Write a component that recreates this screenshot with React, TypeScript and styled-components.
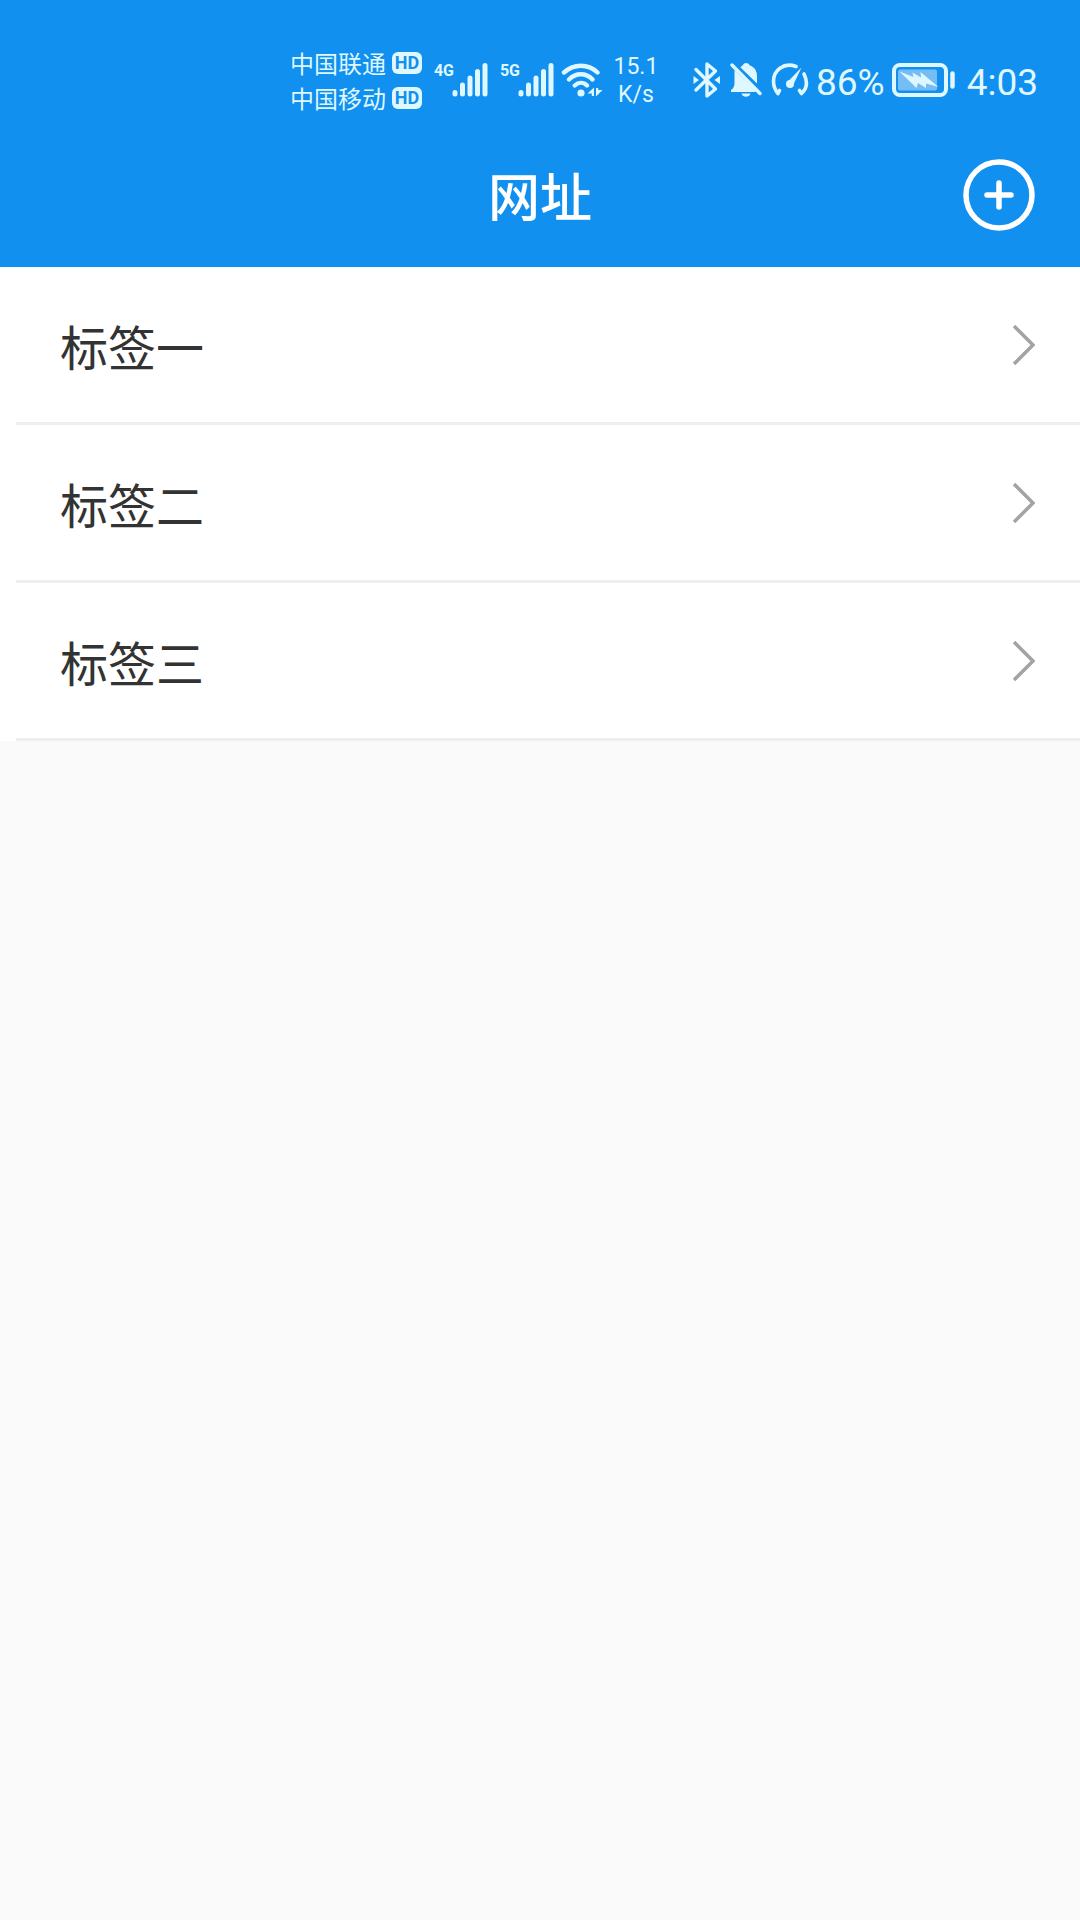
import React from "react";
import styled, { createGlobalStyle } from "styled-components";

const GlobalStyle = createGlobalStyle`
  *, *::before, *::after { box-sizing: border-box; }
  body {
    margin: 0;
    background: #fafafa;
    font-family: Roboto, "Noto Sans CJK SC", sans-serif;
  }
`;

const BLUE = "#1190f0";
const ICE = "#dff7ff";

const Header = styled.header`
  background: ${BLUE};
  color: #fff;
`;

const StatusBar = styled.div`
  display: flex;
  align-items: center;
  justify-content: flex-end;
  height: 123px;
  padding: 37px 42px 0 0;
  color: ${ICE};
  white-space: nowrap;
`;

const Cluster = styled.div<{ $gap: number; $after?: number }>`
  display: flex;
  align-items: center;
  gap: ${(p) => p.$gap}px;
  margin-right: ${(p) => p.$after ?? 0}px;
`;

const Carriers = styled.div`
  display: grid;
  gap: 1px;
`;

const Carrier = styled.div`
  display: flex;
  align-items: center;
  gap: 6px;
  font-family: "Noto Sans CJK SC", sans-serif;
  font-size: 24px;
  line-height: 34px;
`;

const HdBadge = styled.span`
  width: 30px;
  height: 22px;
  border-radius: 6px;
  background: ${ICE};
  color: ${BLUE};
  font-family: Roboto, sans-serif;
  font-size: 18px;
  font-weight: 700;
  line-height: 22px;
  text-align: center;
`;

const Signal = styled.div`
  display: flex;
  align-items: flex-start;
`;

const Generation = styled.span`
  width: 18px;
  font-family: Roboto, sans-serif;
  font-size: 16px;
  font-weight: 700;
  line-height: 16px;
`;

const Speed = styled.div`
  width: 46px;
  padding-top: 2px;
  font-size: 23px;
  line-height: 28px;
  text-align: center;
`;

const StatusText = styled.span`
  font-size: 37px;
  line-height: 44px;
  padding-top: 6px;
`;

const Icon = styled.svg`
  display: block;
  flex: none;
`;

const TitleBar = styled.div`
  display: grid;
  grid-template-columns: 1fr auto 1fr;
  align-items: center;
  height: 144px;
  padding: 0 45px;
`;

const Title = styled.h1`
  grid-column: 2;
  margin: 0;
  font-family: "Noto Sans CJK SC", sans-serif;
  font-size: 52px;
  font-weight: 500;
  line-height: 76px;
`;

const AddButton = styled.button`
  justify-self: end;
  padding: 0;
  border: 0;
  background: none;
  color: #fff;
  cursor: pointer;
`;

const List = styled.ul`
  margin: 0;
  padding: 0;
  list-style: none;
  background: #fff;
`;

const Row = styled.li`
  padding-left: 16px;
`;

const RowLink = styled.a`
  display: flex;
  align-items: center;
  justify-content: space-between;
  height: 158px;
  padding: 0 45px 0 44px;
  border-bottom: 3px solid #eee;
  color: #333;
  font-family: "Noto Sans CJK SC", sans-serif;
  font-size: 48px;
  line-height: 72px;
  text-decoration: none;
`;

function SignalBars() {
  return (
    <Icon width="36" height="34" viewBox="0 0 36 34" stroke={ICE} strokeWidth="5" strokeLinecap="round" aria-hidden="true">
      <path d="M3 29.5v1.5M10.5 22v9M18 15v16M25.5 8.5v22.5M33 2.500v28.5" />
    </Icon>
  );
}

function WifiIcon() {
  return (
    <Icon width="42" height="34" viewBox="0 0 42 34" fill="none" stroke={ICE} strokeWidth="4.4" strokeLinecap="round" aria-hidden="true">
      <path d="M3 9.5C13 0.5 27 0.5 36.5 9.5M8 16.5C15 9.5 25 9.5 31.5 16.5M13.8 22.5C17.5 19 22.5 19 26 22.5" />
      <circle cx="20" cy="30" r="3.6" fill={ICE} stroke="none" />
      <path d="M33 24.500v8.500h-2.200v-2.500H26.500zM35 33.500v-8.500h2.200v2h4.300z" fill={ICE} stroke="none" />
    </Icon>
  );
}

function BluetoothIcon() {
  return (
    <Icon width="28" height="38" viewBox="0 0 28 38" fill="none" stroke={ICE} strokeWidth="3.400" strokeLinejoin="round" strokeLinecap="round" aria-hidden="true">
      <path d="M3 8.500L22.500 28L14 35V22M3 29L22.500 10L14 3V16" />
      <path d="M0.500 15l5.500 4L0.500 23zM27 15L21.500 19l5.500 4z" fill={ICE} stroke="none" />
    </Icon>
  );
}

function MutedBellIcon() {
  return (
    <Icon width="32" height="36" viewBox="0 0 32 36" fill={ICE} aria-hidden="true">
      <path d="M10.5 5.5C11.5 4 12 3.7 13 3.3C13.5 .3 18.5 .3 19.5 3.3C24.5 5 27 9 27 14V21.5z" />
      <path d="M5.5 9L25.5 28.5V30H1V28C3.5 26.5 4.5 24 4.5 21V8z" />
      <path d="M11.5 31.5h9c-1 4.3-8 4.3-9 0z" />
      <path d="M2 3L30 31.5" stroke={ICE} strokeWidth="3.4" strokeLinecap="round" />
    </Icon>
  );
}

function GaugeIcon() {
  return (
    <Icon width="38" height="36" viewBox="0 0 38 36" fill="none" stroke={ICE} strokeWidth="3.6" strokeLinecap="round" strokeLinejoin="round" aria-hidden="true">
      <path d="M25 4.5C13 0 2.500 8 2.500 19.500C2.500 25 4.500 28.500 7 31.500L8.500 28.500M33 12C37 20 35.500 27 30.500 31.500L28.500 28.500" />
      <path d="M30.500 5.500L22 23.500C20 27.500 14 24.500 16 20.500z" fill={ICE} stroke="none" />
      <circle cx="19" cy="22" r="4" fill={ICE} stroke="none" />
    </Icon>
  );
}

function BatteryIcon() {
  return (
    <Icon width="64" height="34" viewBox="0 0 64 34" fill="none" aria-hidden="true">
      <rect x="2" y="2" width="52" height="30" rx="6" stroke={ICE} strokeWidth="4" />
      <rect x="6" y="6.500" width="39" height="21" rx="2" fill="#74bdf7" />
      <path d="M7.500 8.500L21.500 14L20.500 9.500L29 14.500L28.500 9L46.500 24L34 20.500L34 25L26 20L24.500 25z" fill={ICE} />
      <path d="M60.500 10.500v13" stroke={ICE} strokeWidth="4.500" strokeLinecap="round" />
    </Icon>
  );
}

function PlusCircleIcon() {
  return (
    <Icon width="72" height="72" viewBox="0 0 72 72" fill="none" stroke="currentColor" strokeWidth="5.500" strokeLinecap="round" aria-hidden="true">
      <circle cx="36" cy="36" r="33" />
      <path d="M36 24v24M24 36h24" />
    </Icon>
  );
}

function Chevron() {
  return (
    <Icon width="22" height="40" viewBox="0 0 22 40" fill="none" stroke="#a3a3a3" strokeWidth="3.500" aria-hidden="true">
      <path d="M1 1L20 20L1 39" />
    </Icon>
  );
}

const carriers = ["中国联通", "中国移动"];
const generations = ["4G", "5G"];
const labels = ["标签一", "标签二", "标签三"];

export default function App() {
  return (
    <>
      <GlobalStyle />
      <Header>
        <StatusBar>
          <Cluster $gap={12} $after={7}>
            <Carriers>
              {carriers.map((name) => (
                <Carrier key={name}>
                  {name}
                  <HdBadge>HD</HdBadge>
                </Carrier>
              ))}
            </Carriers>
            {generations.map((name) => (
              <Signal key={name}>
                <Generation>{name}</Generation>
                <SignalBars />
              </Signal>
            ))}
          </Cluster>
          <Cluster $gap={10} $after={34}>
            <WifiIcon />
            <Speed>
              15.1
              <br />
              K/s
            </Speed>
          </Cluster>
          <Cluster $gap={7} $after={11}>
            <Cluster $gap={9}>
              <BluetoothIcon />
              <MutedBellIcon />
              <GaugeIcon />
            </Cluster>
            <StatusText>86%</StatusText>
            <BatteryIcon />
          </Cluster>
          <StatusText>4:03</StatusText>
        </StatusBar>
        <TitleBar>
          <Title>网址</Title>
          <AddButton type="button" aria-label="添加">
            <PlusCircleIcon />
          </AddButton>
        </TitleBar>
      </Header>
      <main>
        <List>
          {labels.map((label) => (
            <Row key={label}>
              <RowLink href="#">
                {label}
                <Chevron />
              </RowLink>
            </Row>
          ))}
        </List>
      </main>
    </>
  );
}
